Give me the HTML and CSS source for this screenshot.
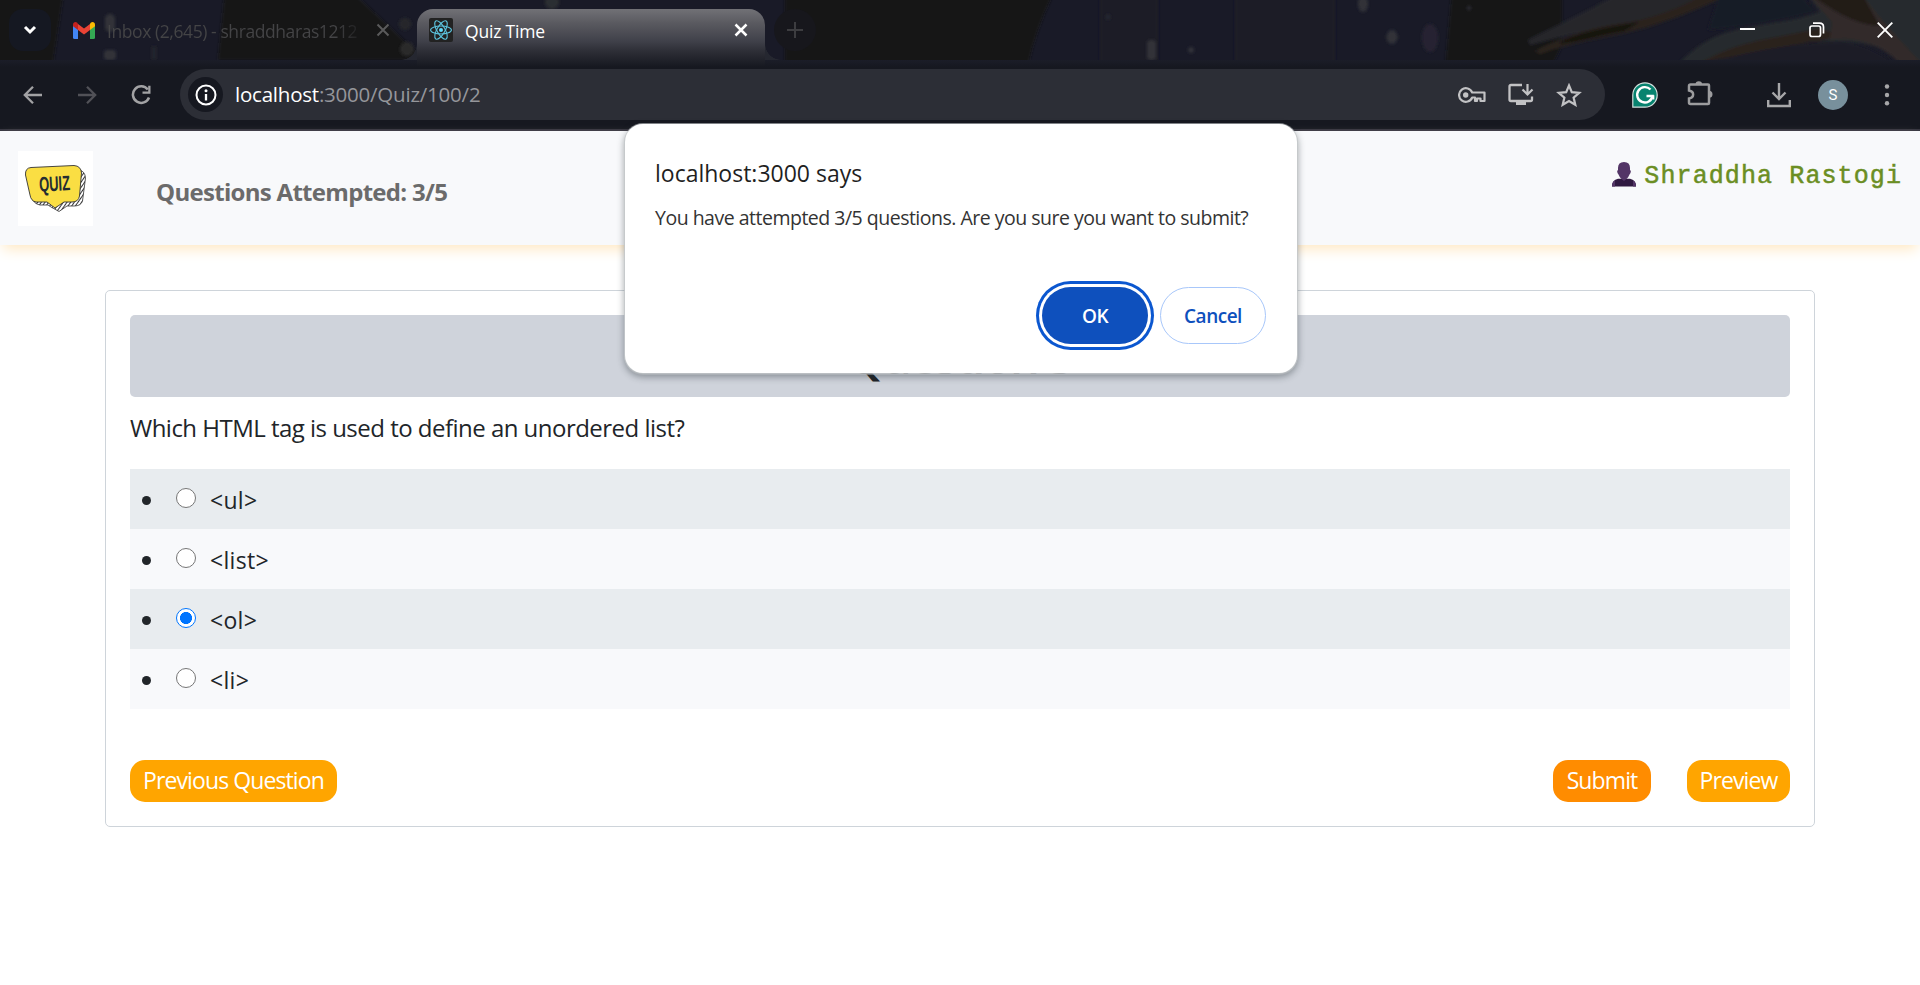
FILE: index.html
```html
<!DOCTYPE html>
<html lang="en">
<head>
<meta charset="utf-8">
<title>Quiz Time</title>
<link rel="stylesheet" href="styles.css">
</head>
<body>
<div class="browser">
  <div class="tabstrip">
    <svg class="theme-art" width="1920" height="60" viewBox="0 0 1920 60" preserveAspectRatio="none">
      <defs>
        <filter id="soft" x="-10%" y="-50%" width="120%" height="200%"><feGaussianBlur stdDeviation="1.500"/></filter>
      </defs>
      <rect width="1920" height="60" fill="#191a27"/>
      <g filter="url(#soft)">
        <path d="M-10-10H64L52 70H-10z" fill="#121213"/>
        <path d="M225-10H350L425 60H218z" fill="#141415"/>
        <path d="M785-10H1055Q1035 30 1027 70H785z" fill="#141414"/>
        <path d="M1100-5h58v70h-58zM1235-5h100v70h-100z" fill="#1b1d28"/>
        <path d="M1452-10H1562L1562 18 1560 50 1550 70H1445z" fill="#151619"/>
        <path d="M1528 40C1560 24 1590 10 1625-10H1730C1690 12 1655 24 1610 27 1580 32 1555 38 1530 45z" fill="#25272b"/>
        <path d="M1535 51C1570 34 1600 25 1630 22 1660 16 1690 4 1705-8H1735C1700 8 1660 26 1620 34 1590 40 1560 46 1540 54z" fill="#2b221e"/>
        <path d="M1560 42C1580 32 1610 26 1640 22L1625 31C1600 35 1580 42 1560 44z" fill="#16130f"/>
        <path d="M1676 66C1715 26 1740 30 1800 18L1820 12 1805-8H1930V64H1905C1885 42 1850 40 1810 42 1770 50 1730 54 1700 64z" fill="#27292d"/>
        <path d="M1708 30Q1760 26 1816 12L1798-8H1720z" fill="#191a27"/>
        <path d="M1696 66C1735 40 1770 40 1820 28L1836 34Q1830 40 1810 42 1770 50 1715 60z" fill="#2b221e"/>
        <path d="M1808-6H1862C1880 20 1900 40 1922 64H1900C1880 42 1850 36 1830 40L1832 22z" fill="#332b29"/>
        <path d="M1812-4C1830 8 1850 24 1880 26L1862-6z" fill="#211a19"/>
        <path d="M1700 66C1750 50 1800 42 1845 42 1870 46 1885 54 1895 66z" fill="#1a1b28"/>
      </g>
      <g fill="#303139" filter="url(#soft)">
        <rect x="105" y="14" width="10" height="18" rx="5"/><rect x="104" y="50" width="12" height="10" rx="3"/>
        <rect x="152" y="46" width="4" height="14" rx="2" fill="#24252e"/>
        <circle cx="405" cy="24" r="6" fill="#26272b"/><circle cx="407" cy="49" r="7" fill="#2a2a2b"/><circle cx="552" cy="2" r="7" fill="#2c2d30"/>
        <rect x="1147" y="40" width="9" height="20" rx="4"/><circle cx="1191" cy="50" r="3"/><circle cx="1108" cy="17" r="2.500" fill="#262a33"/>
        <ellipse cx="1363" cy="4" rx="5" ry="8"/><ellipse cx="1392" cy="37" rx="5.500" ry="7"/>
        <ellipse cx="1430" cy="38" rx="8" ry="14" fill="#252431"/><circle cx="1469" cy="8" r="2"/>
      </g>
    </svg>
    <div class="tab-search"><svg width="14" height="10" viewBox="0 0 14 10"><path d="M2 2l5 5 5-5" fill="none" stroke="#fff" stroke-width="3"/></svg></div>
    <div class="tab tab-idle">
      <svg class="gmail" width="22" height="17" viewBox="0 0 22 17">
        <path d="M0 3v12.500Q0 17 1.500 17H5V7z" fill="#4285f4"/>
        <path d="M22 3v12.500Q22 17 20.500 17H17V7z" fill="#34a853"/>
        <path d="M17 2v6l5-3.800V2.500C22 .3 19.500-.8 17.700.8z" fill="#fbbc04"/>
        <path d="M5 8V2l6 4.500L17 2v6l-6 4.500z" fill="#ea4335"/>
        <path d="M0 2.500V4.200L5 8V2L4.300.8C2.500-.8 0 .3 0 2.500z" fill="#c5221f"/>
      </svg>
      <span class="tab-title idle-title">Inbox (2,645) - shraddharas1212</span>
      <svg class="tab-close" width="14" height="14" viewBox="0 0 14 14"><path d="M1.500 1.500l11 11m0-11l-11 11" stroke="#5a5a5b" stroke-width="2"/></svg>
    </div>
    <div class="tab tab-active">
      <svg class="react" width="24" height="24" viewBox="0 0 24 24"><rect width="24" height="24" rx="2" fill="#222"/><g fill="none" stroke="#5cc4de" stroke-width="1.100"><ellipse cx="12" cy="12" rx="10.400" ry="4"/><ellipse cx="12" cy="12" rx="10.400" ry="4" transform="rotate(60 12 12)"/><ellipse cx="12" cy="12" rx="10.400" ry="4" transform="rotate(120 12 12)"/></g><circle cx="12" cy="12" r="2" fill="#61dafb"/></svg>
      <span class="tab-title active-title">Quiz Time</span>
      <svg class="tab-close" width="14" height="14" viewBox="0 0 14 14"><path d="M1.500 1.500l11 11m0-11l-11 11" stroke="#fff" stroke-width="2.500"/></svg>
    </div>
    <div class="new-tab"><svg width="16" height="16" viewBox="0 0 16 16"><path d="M8 0v16M0 8h16" stroke="#3d3d40" stroke-width="2"/></svg></div>
    <div class="window-controls">
      <svg width="16" height="16" viewBox="0 0 16 16"><path d="M0 7h15" stroke="#fff" stroke-width="2"/></svg>
      <svg width="16" height="16" viewBox="0 0 16 16"><g fill="none" stroke="#fff" stroke-width="1.700"><rect x="1" y="4" width="10.500" height="10.500" rx="2"/><path d="M4 1.200h6.500Q14.500 1.200 14.500 5v6.500"/></g></svg>
      <svg width="16" height="16" viewBox="0 0 16 16"><path d="M.7.700l14.600 14.600m0-14.600L.7 15.300" stroke="#fff" stroke-width="1.900"/></svg>
    </div>
  </div>
  <div class="toolbar">
    <div class="nav-buttons">
      <svg width="20" height="20" viewBox="0 0 20 20"><path d="M19 10H2.500M10 1.800L1.800 10l8.200 8.200" fill="none" stroke="#a2a2a4" stroke-width="2.300"/></svg>
      <svg width="20" height="20" viewBox="0 0 20 20"><path d="M1 10h16.500M10 1.800l8.200 8.200-8.200 8.200" fill="none" stroke="#515157" stroke-width="2.300"/></svg>
      <svg width="20" height="20" viewBox="0 0 20 20"><path d="M16.800 4.500A8.300 8.300 0 1 0 18 12.500" fill="none" stroke="#a2a2a4" stroke-width="2.500"/><path d="M19.500.8v8h-8V6.500h5.700V.8z" fill="#a2a2a4"/></svg>
    </div>
    <div class="omnibox">
      <div class="site-info"><svg width="22" height="22" viewBox="0 0 22 22"><circle cx="11" cy="11" r="9.500" fill="none" stroke="#fff" stroke-width="2"/><path d="M11 10v6.500" stroke="#fff" stroke-width="2.300"/><circle cx="11" cy="6.700" r="1.500" fill="#fff"/></svg></div>
      <span class="url"><b>localhost</b>:3000/Quiz/100/2</span>
      <div class="omni-actions">
        <svg width="28" height="16" viewBox="0 0 28 16"><path d="M14.200 5.500A6.800 6.800 0 1 0 14.200 10.500H17V14H19V11.500H22.500V14H26.500V5.500z" fill="none" stroke="#c2c2c4" stroke-width="2.200" stroke-linejoin="round"/><circle cx="7.700" cy="8" r="2.700" fill="#c2c2c4"/></svg>
        <svg width="26" height="24" viewBox="0 0 26 24"><path d="M14 2H3Q1.500 2 1.500 3.500v13Q1.500 18 3 18h19.500q1.500 0 1.500-1.500V13.500" fill="none" stroke="#c2c2c4" stroke-width="2.300"/><path d="M8 18h10v4H8z" fill="#c2c2c4"/><path d="M19.500 1v10M14.500 6.500l5 5 5-5" fill="none" stroke="#c2c2c4" stroke-width="2.200"/></svg>
        <svg width="26" height="24" viewBox="0 0 26 24"><path d="M13 2.500l2.800 6.700 7.400.6-5.600 4.800 1.700 7.200L13 18l-6.300 3.800 1.700-7.200-5.600-4.800 7.400-.6z" fill="none" stroke="#c2c2c4" stroke-width="2.200"/></svg>
      </div>
    </div>
    <div class="extensions">
      <svg class="grammar" width="26" height="26" viewBox="0 0 26 26"><path d="M.8 25.200V13A12.200 12.200 0 1 1 13 25.200z" fill="#07836f" stroke="#d3dedc" stroke-width="1.200"/><path d="M18.500 7.500A7.700 7.700 0 1 0 20.500 14H14.500" fill="none" stroke="#fff" stroke-width="2.400"/><path d="M17 14h4.500v3.500" fill="none" stroke="#fff" stroke-width="1.700"/></svg>
      <svg class="puzzle" width="26" height="26" viewBox="0 0 26 26"><path d="M3.500 4.500H21Q22 4.500 22 5.500V23Q22 24 21 24H3.500Q2 24 2 22.500V18.500C7.500 17.500 7.500 11.500 2 10.500V6Q2 4.500 3.500 4.500z" fill="none" stroke="#9c9c9e" stroke-width="2.500"/><path d="M8.500 4.500a3.300 3.300 0 0 1 6.600 0zM22 10.800a3.500 3.500 0 0 1 0 7z" fill="#9c9c9e"/></svg>
      <svg class="download" width="26" height="26" viewBox="0 0 26 26"><path d="M13 1v15M6.500 10.500l6.500 6.500 6.500-6.500M2.200 18v6h21.600v-6" fill="none" stroke="#a7a7a9" stroke-width="2.400"/></svg>
      <div class="avatar">S</div>
      <svg class="menu" width="6" height="22" viewBox="0 0 6 22"><g fill="#a7a7a9"><circle cx="3" cy="2.500" r="2.200"/><circle cx="3" cy="11" r="2.200"/><circle cx="3" cy="19.300" r="2.200"/></g></svg>
    </div>
  </div>
</div>

<header class="quiz-header">
  <svg class="logo" width="75" height="75" viewBox="0 0 75 75">
    <defs><pattern id="hatch" width="3" height="3" patternUnits="userSpaceOnUse" patternTransform="rotate(35)"><rect width="3" height="3" fill="#fff"/><rect width="1" height="3" fill="#333"/></pattern></defs>
    <rect width="75" height="75" fill="#fff"/>
    <path d="M14 25L61 19Q67 20 67.500 27L64.500 50Q63 55 56 55H49L41 60.500 33 56 30 54H22Q16 53 14 47z" fill="url(#hatch)" stroke="#333" stroke-width=".8"/>
    <path d="M13 16.500L56 14.500Q63 15 63.500 22L61.500 45Q60.500 51 54 51H46L37 57 29 51H18Q13 50 12 44L7.500 24Q7 17 13 16.500z" fill="#fade43" stroke="#333" stroke-width=".9"/>
    <text x="21" y="40" class="logo-text" textLength="31" lengthAdjust="spacingAndGlyphs" transform="rotate(-3 36 33)">QUIZ</text>
  </svg>
  <div class="attempted">Questions Attempted: 3/5</div>
  <div class="user">
    <svg width="24" height="26" viewBox="0 0 24 26"><path d="M0 25.500Q0 19 6 17.800H18Q24 19 24 25.500z" fill="#301a41"/><path d="M0 25.500Q0 20.500 3 19.500V25.500zM24 25.500Q24 20.500 21 19.500V25.500z" fill="#533566"/><path d="M6 7Q6 1 12 1t6 6v2q1.500.5.500 3l-1 1.500Q16.500 16 15 17.500L12 20 9 17.500Q7.500 16 6.500 13.500l-1-1.500Q4.500 9.500 6 9z" fill="#533566"/></svg>
    <span>Shraddha Rastogi</span>
  </div>
</header>

<main class="card">
  <h1 class="question-title"><span>Question 3</span></h1>
  <p class="question">Which HTML tag is used to define an unordered list?</p>
  <ul class="options">
    <li><i class="bullet"></i><i class="radio"></i><span>&lt;ul&gt;</span></li>
    <li><i class="bullet"></i><i class="radio"></i><span>&lt;list&gt;</span></li>
    <li><i class="bullet"></i><i class="radio checked"></i><span>&lt;ol&gt;</span></li>
    <li><i class="bullet"></i><i class="radio"></i><span>&lt;li&gt;</span></li>
  </ul>
  <div class="actions">
    <button class="btn btn-prev">Previous Question</button>
    <button class="btn btn-submit">Submit</button>
    <button class="btn btn-preview">Preview</button>
  </div>
</main>

<div class="dialog">
  <div class="dialog-title">localhost:3000 says</div>
  <div class="dialog-message">You have attempted 3/5 questions. Are you sure you want to submit?</div>
  <div class="dialog-actions">
    <button class="ok">OK</button>
    <button class="cancel">Cancel</button>
  </div>
</div>
</body>
</html>
```
FILE: styles.css
```css
* { box-sizing: border-box; }
body {
  margin: 0;
  height: 985px;
  overflow: hidden;
  background: #fff;
  color: #212529;
  font-family: "Open Sans", "Noto Sans", sans-serif;
}
svg { display: block; flex: none; }
button { font-family: inherit; padding: 0; border: 0; white-space: nowrap; }

/* Browser frame */
.browser { height: 131px; background: #161820; border-bottom: 2px solid #35343f; }
.tabstrip { position: relative; display: flex; height: 60px; padding: 9px 27px 0 9px; }
.theme-art { position: absolute; left: 0; top: 0; }
.tabstrip > div { position: relative; }
.tab-search {
  display: flex; align-items: center; justify-content: center;
  width: 42px; height: 42px; border-radius: 14px; background: #151822;
}
.tab { display: flex; height: 42px; align-items: center; }
.tab-title { font-size: 17.5px; line-height: 24px; white-space: nowrap; }
.tab-idle { width: 366px; padding: 0 27px 0 22px; }
.idle-title {
  width: 256px; margin: 2px 15px 0 12px; letter-spacing: -.42px;
  background: linear-gradient(90deg, #444446 90%, #1c1c1d);
  -webkit-background-clip: text; background-clip: text; color: transparent;
}
.tab-active {
  z-index: 1;
  width: 348px; height: 60px; padding: 0 17px 18px 12px;
  border-radius: 16px 16px 0 0;
  background: linear-gradient(#717176 0, #5a5a60 14px, #40414a 32px, #2c2d35 43px, #161820 58px);
}
.tab-active::before, .tab-active::after {
  content: ""; position: absolute; top: 35px; width: 16px; height: 16px;
}
.tab-active::before { left: -16px; background: radial-gradient(circle at 0 0, transparent 15.5px, #252730 16px); }
.tab-active::after { right: -16px; background: radial-gradient(circle at 100% 0, transparent 15.5px, #252730 16px); }
.active-title { margin: 2px auto 0 12px; color: #fff; letter-spacing: -.2px; }
.new-tab {
  display: flex; align-items: center; justify-content: center;
  width: 42px; height: 42px; margin-left: 9px; border-radius: 50%; background: #17171c;
}
.window-controls { display: flex; gap: 52.500px; margin-left: auto; padding-top: 13px; }

.toolbar { display: flex; height: 69px; padding-top: 9px; background: linear-gradient(#1b1d28, #161820 7px); }
.nav-buttons { display: flex; align-items: center; gap: 34px; width: 180px; height: 51px; padding-left: 23px; }
.omnibox {
  position: relative; z-index: 2;
  display: flex; align-items: center; width: 1425px; height: 51px;
  padding: 0 23px 0 8px; border-radius: 26px; background: #2c2e36;
}
.site-info {
  display: flex; align-items: center; justify-content: center;
  width: 35px; height: 35px; border-radius: 50%; background: #161820;
}
.url { margin: -2px 0 0 12px; font-size: 20.5px; line-height: 28px; color: #95969b; letter-spacing: -.22px; }
.url b { font-weight: 400; color: #fff; }
.omni-actions { display: flex; align-items: center; gap: 22px; margin-left: auto; }
.extensions { display: flex; align-items: center; height: 51px; padding-left: 27px; }
.puzzle { margin: -3px 0 0 29px; }
.download { margin-left: 53px; }
.avatar {
  width: 30px; height: 30px; margin-left: 26px; border-radius: 50%;
  background: #78909c; color: #fff; font: 15px/31px Roboto, sans-serif; text-align: center;
}
.menu { margin-left: 36px; }

/* Quiz page */
.quiz-header {
  display: flex; height: 114px; padding: 20px 19px 0 18px;
  background: #f8f9fb; box-shadow: 0 7px 13px -3px #ffe8c2;
}
.logo-text { font: bold 21px "Liberation Sans Narrow", "Liberation Sans", sans-serif; fill: #252d31; }
.attempted { margin: 24px auto 0 63px; color: #6b6b6b; font-size: 24px; line-height: 34px; font-weight: 700; letter-spacing: -.7px; white-space: nowrap; }
.user { display: flex; gap: 8px; height: 46px; padding-top: 10px; color: #6b8e23; }
.user span { font: 25px/31px "Courier New", "Liberation Mono", monospace; letter-spacing: 1.1px; margin-right: -1px; -webkit-text-stroke: .5px #6b8e23; white-space: nowrap; }

.card {
  width: 1710px; height: 537px; margin: 45px 0 0 105px; padding: 24px;
  border: 1px solid #ced4da; border-radius: 5px; background: #fff;
}
.question-title {
  display: flex; justify-content: center; height: 82px; margin: 0;
  border-radius: 5px; background: #cfd3db;
  font-size: 47px; font-weight: 600; line-height: 60px; padding-top: 11px; letter-spacing: -2px;
}
.question { margin: 13px 0 0; height: 59px; font-size: 24px; line-height: 36px; letter-spacing: -.52px; }
.options { margin: 0; padding: 0; list-style: none; font-size: 23px; }
.options li { display: flex; align-items: center; height: 60px; padding-left: 12px; background: #f8f9fb; }
.options li:nth-child(odd) { background: #e8ecef; }
.bullet { width: 9px; height: 9px; margin-top: 2px; border-radius: 50%; background: #212529; }
.radio { width: 20px; height: 20px; margin: -2px 14px 0 25px; border: 1.5px solid #767676; border-radius: 50%; background: #fff; }
.radio.checked { border-color: #0075ff; background: radial-gradient(circle, #0075ff 5.700px, #fff 6.300px); }
.options span { line-height: 30px; padding-top: 2px; letter-spacing: .3px; }
.actions { display: flex; margin-top: 51px; }
.btn { height: 42px; padding-bottom: 2px; border-radius: 15px; background: #ffa500; color: #fff; font-size: 23px; letter-spacing: -.9px; }
.btn-prev { width: 207px; margin-right: auto; }
.btn-submit { width: 98px; margin-right: 36px; background: #ff8c00; }
.btn-preview { width: 103px; }

/* Confirmation dialog */
.dialog {
  position: absolute; z-index: 5; left: 625px; top: 124px;
  width: 672px; height: 249px; padding: 32px 31px 0 30px;
  border-radius: 18px; background: #fff;
  box-shadow: 0 0 0 1px rgba(200, 203, 205, .6), 0 1px 0 1px rgba(190, 194, 197, .5), 0 3px 7px 1px rgba(30, 40, 45, .4);
}
.dialog-title { font-size: 23px; line-height: 34px; font-weight: 500; color: #1f1f1f; letter-spacing: 0; }
.dialog-message { margin-top: 14px; font-size: 19.5px; line-height: 28px; color: #333; letter-spacing: -.5px; white-space: nowrap; }
.dialog-actions { display: flex; justify-content: flex-end; gap: 12px; margin-top: 55px; }
.dialog button { height: 57px; border-radius: 29px; font-size: 19px; font-weight: 600; letter-spacing: -.5px; }
.ok { width: 106px; background: #0e50bd; color: #fff; box-shadow: 0 0 0 3px #fff, 0 0 0 6px #0b57d0; }
.dialog .cancel { width: 106px; border: 1.5px solid #a8c7fa; background: #fff; color: #0e50bd; }
```
